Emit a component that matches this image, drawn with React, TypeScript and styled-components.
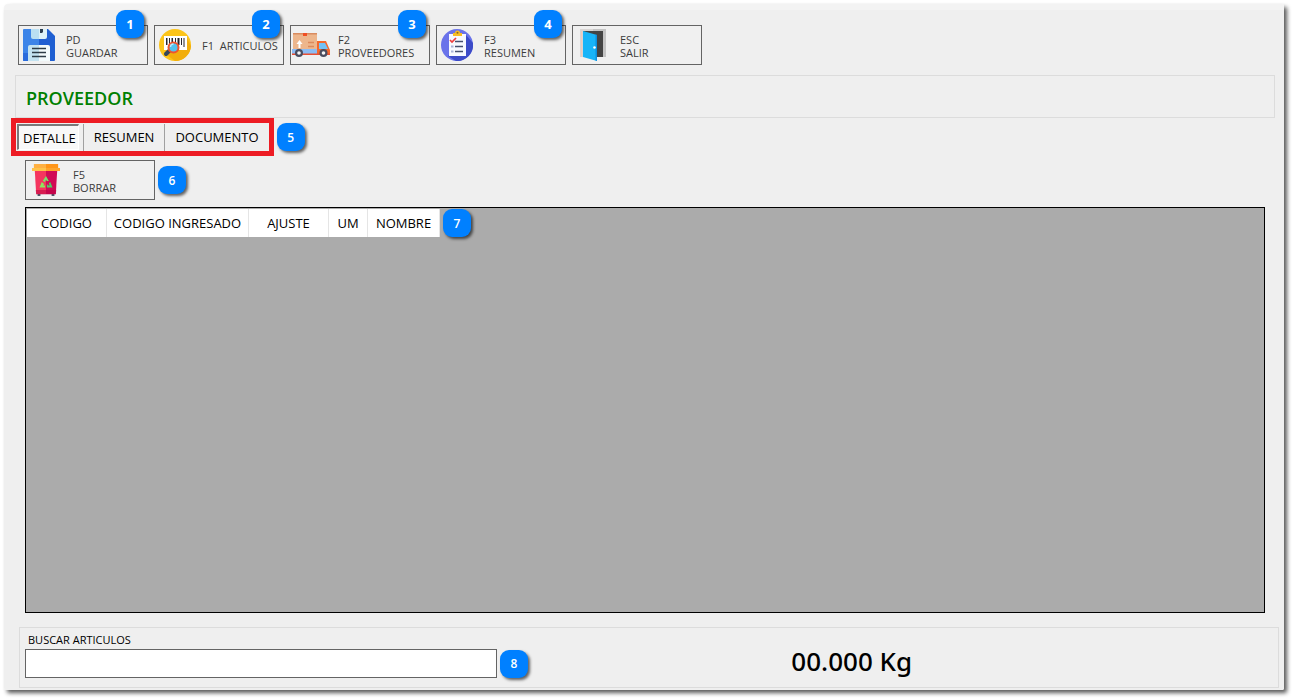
import React, { useState } from "react";
import styled, { createGlobalStyle, css } from "styled-components";

const GlobalStyle = createGlobalStyle`
  *, *::before, *::after { box-sizing: border-box; }
  body {
    margin: 0;
    background: #fff;
    color: #000;
    font-family: "Open Sans", "Noto Sans", sans-serif;
    font-size: 12px;
  }
  button, input { font: inherit; color: inherit; }
`;

const Page = styled.div`
  display: flex;
  min-height: 100vh;
  padding: 4px 9px 9px 4px;
`;

const Window = styled.main`
  flex: 1;
  min-width: 0;
  display: flex;
  flex-direction: column;
  background: linear-gradient(#f3f3f3 6px, #efefef 6px);
  border-radius: 4px 2px 2px 2px;
  box-shadow: 3px 3px 4px rgba(0, 0, 0, 0.65);
`;

const Toolbar = styled.div`
  display: flex;
  gap: 6px;
  padding: 21px 14px 0;
`;

const ToolSlot = styled.div`
  position: relative;
`;

const ToolButton = styled.button<{ $wide?: boolean }>`
  display: flex;
  align-items: center;
  gap: 7px;
  width: ${(p) => (p.$wide ? 140 : 130)}px;
  height: 40px;
  padding: 0;
  border: 1px solid #646464;
  background: #f0f0f0;
  color: #3c3c3c;
  font-size: 11px;
  line-height: 13px;
  text-align: left;
  white-space: pre;
`;

const IconSlot = styled.span`
  flex: none;
  display: flex;
  justify-content: center;
  width: 40px;
`;

const ToolLabel = styled.span`
  padding-top: 1px;
`;

const Badge = styled.span<{ $over?: boolean }>`
  flex: none;
  display: flex;
  align-items: center;
  justify-content: center;
  width: 28px;
  height: 28px;
  border-radius: 9px;
  background: #0080ff;
  box-shadow: 2px 2px 3px rgba(0, 0, 0, 0.6);
  color: #fff;
  font-size: 12px;
  font-weight: 600;
  ${(p) =>
    p.$over &&
    css`
      position: absolute;
      top: -15px;
      right: 4px;
      font-size: 13px;
      font-weight: 700;
    `}
`;

const Supplier = styled.h1`
  margin: 10px 9px 0 11px;
  padding: 10px 10px 6px;
  border: 1px solid #dcdcdc;
  color: #008000;
  font-size: 18px;
  line-height: 25px;
  font-weight: 600;
`;

const Row = styled.div<{ $left: number; $top?: number }>`
  display: flex;
  align-items: center;
  gap: 3px;
  margin: ${(p) => p.$top ?? 0}px 0 0 ${(p) => p.$left}px;
`;

const Tabs = styled.div`
  display: flex;
  align-items: stretch;
  height: 38px;
  padding: 1px 4px 0 1px;
  border: 5px solid #ed1c24;
`;

const Tab = styled.button<{ $active: boolean }>`
  height: 26px;
  padding: 0 5px;
  border: 1px solid transparent;
  background: transparent;
  font-size: 13px;
  line-height: 20px;
  ${(p) =>
    p.$active &&
    css`
      padding: 0 2px 0 4px;
      border-width: 2px 1px 1px 2px;
      border-style: solid;
      border-color: #7a7a7a #fff #fff #7a7a7a;
      background: #f8f8f8;
    `}
`;

const TabSeparator = styled.span`
  width: 1px;
  margin: 0 4px;
  background: #a0a0a0;
`;

const Grid = styled.section`
  flex: 1;
  display: flex;
  align-items: flex-start;
  gap: 3px;
  min-height: 200px;
  margin: 7px 19px 0 21px;
  padding: 1px;
  border: 1px solid #000;
  background: #ababab;
`;

const Table = styled.table`
  table-layout: fixed;
  width: 413px;
  border-spacing: 0;
`;

const HeadCell = styled.th<{ $width: number }>`
  width: ${(p) => p.$width}px;
  height: 28px;
  padding: 0;
  border-right: 1px solid #e5e5e5;
  background: #fff;
  font-size: 13px;
  font-weight: 400;
  line-height: 18px;
  white-space: nowrap;
`;

const Footer = styled.footer`
  display: grid;
  grid-template-columns: 61% 1fr;
  margin: 14px 5px 2px 15px;
  padding: 4px 0 9px 5px;
  border: 1px solid #dcdcdc;
`;

const SearchLabel = styled.label`
  display: block;
  padding-left: 3px;
  margin-bottom: 1px;
  font-size: 11px;
  line-height: 16px;
`;

const SearchInput = styled.input`
  width: 472px;
  height: 29px;
  padding: 0 6px;
  border: 1px solid #646464;
  background: #fff;
  font-size: 13px;
`;

const Weight = styled.output`
  align-self: end;
  padding-left: 2px;
  font-family: "Noto Sans", "Open Sans", sans-serif;
  font-size: 26px;
  font-weight: 500;
  line-height: 34px;
`;

const SaveIcon = () => (
  <svg width="32" height="32" viewBox="0 0 32 32" aria-hidden="true">
    <path d="M1 0h15v32H1a1 1 0 0 1-1-1V1a1 1 0 0 1 1-1z" fill="#3c84e8" />
    <path d="M16 0h9l7 7v24a1 1 0 0 1-1 1H16z" fill="#1f5fd2" />
    <path d="M0 24h5v8H1a1 1 0 0 1-1-1z" fill="#2a6bdc" />
    <path d="M8 0h8v10h-6a2 2 0 0 1-2-2z" fill="#b9dff2" />
    <path d="M16 0h8v8a2 2 0 0 1-2 2h-6z" fill="#dcf1f8" />
    <path d="M17 0h3v3l-1 1h-2z" fill="#2c3e50" />
    <path d="M5 18a2 2 0 0 1 2-2h9v16H5z" fill="#c3e3f1" />
    <path d="M16 16h9a2 2 0 0 1 2 2v14H16z" fill="#f2fafb" />
    <path d="M9 19.500h14M9 23.500h14M9 27.500h14" stroke="#2d3c46" strokeWidth="1.700" />
  </svg>
);

const ArticlesIcon = () => (
  <svg width="32" height="32" viewBox="0 0 32 32" aria-hidden="true">
    <circle cx="16" cy="16" r="16" fill="#fcc419" />
    <path d="M28 9l4 8a16 16 0 0 1-16 15l-8-6z" fill="#f2ae0c" />
    <path d="M5 7h23v14H5z" fill="#fff" />
    <path d="M7 9h1.500v7H7zM10 9h1v6h-1zM12.500 9h1.500v6h-1.500zM16 9h1v5h-1zM18.500 9h2v7h-2zM22 9h1v7h-1zM24.500 9h1v9h-1z" fill="#26262e" />
    <path d="M11 21l-4 4" stroke="#34465a" strokeWidth="4" strokeLinecap="round" />
    <circle cx="14.500" cy="18.500" r="5" fill="#54c1ee" stroke="#f0532d" strokeWidth="2" />
    <path d="M11.500 18a3 3 0 0 1 3-3" stroke="#b8ecff" strokeWidth="1.300" fill="none" />
  </svg>
);

const TruckIcon = () => (
  <svg width="38" height="26" viewBox="0 0 38 26" aria-hidden="true">
    <path d="M1 1h24v20H1z" fill="#edb68c" />
    <path d="M1 1h24v1.500H1z" fill="#d98c60" />
    <path d="M11 1h4v3h-4z" fill="#f04e23" />
    <path d="M7.500 8l3 4h-2v4h-2v-4h-2z" fill="#fff" />
    <path d="M16 10.500h6M16 14.500h6" stroke="#dc8a5c" strokeWidth="1.300" />
    <path d="M0 17h25v5H0z" fill="#8dbcf3" />
    <path d="M25 9h9l3 7 1 2v4H25z" fill="#f4682d" />
    <path d="M27 11h6l3 6h-9z" fill="#74c1f5" />
    <path d="M0 21.500h38V23H0z" fill="#e94f32" />
    <circle cx="7" cy="21" r="4" fill="#4a4c5e" />
    <circle cx="7" cy="21" r="1.800" fill="#f5f5f5" />
    <circle cx="31.500" cy="21" r="4" fill="#4a4c5e" />
    <circle cx="31.500" cy="21" r="1.800" fill="#f5f5f5" />
  </svg>
);

const SummaryIcon = () => (
  <svg width="32" height="32" viewBox="0 0 32 32" aria-hidden="true">
    <circle cx="16" cy="16" r="16" fill="#6a73ea" />
    <path d="M25 6l7 8a16 16 0 0 1-17 18l-8-5z" fill="#3c4bc8" />
    <path d="M8 5h17v22H8z" fill="#f7f9ff" />
    <path d="M12 7V4h2a2.500 2.500 0 0 1 5 0h2v3z" fill="#f8bd22" />
    <circle cx="16.500" cy="3.800" r="1" fill="#8b6a20" />
    <path d="M9 11l2 2 4-4" stroke="#ee3e3e" strokeWidth="1.700" fill="none" />
    <path d="M14 12.500h8M14 17.500h8M14 22.500h8" stroke="#45506f" strokeWidth="1.500" />
    <path d="M10 16.500h2.500v2H10zM10 21.500h2.500v2H10z" fill="#a9b3d8" />
  </svg>
);

const ExitIcon = () => (
  <svg width="26" height="32" viewBox="0 0 26 32" aria-hidden="true">
    <path d="M0 0h26v28H0z" fill="#d9d5d3" />
    <path d="M13 0h13v28H13z" fill="#c4c4c4" />
    <path d="M3 2h20v26H3z" fill="#444" />
    <path d="M1.500 2v26" stroke="#efc9bd" />
    <path d="M3 2l14 4v26L3 28z" fill="#18b4f8" />
    <path d="M15.500 5.600L17 6v26l-1.500-.4z" fill="#0b8fe0" />
    <circle cx="14.500" cy="18.500" r="1.300" fill="#fff" />
  </svg>
);

const DeleteIcon = () => (
  <svg width="28" height="32" viewBox="0 0 30 32" preserveAspectRatio="none" aria-hidden="true">
    <path d="M6 30h3v2H6zM21 30h3v2h-3z" fill="#4d5568" />
    <path d="M3 7h12v23H4.500z" fill="#f5365f" />
    <path d="M15 7h12l-1.500 23H15z" fill="#d10a55" />
    <path d="M4 26h22l-.5 4.500h-21z" fill="#b8003f" opacity=".5" />
    <path d="M2 0h13v5H2z" fill="#ffb042" />
    <path d="M15 0h13v5H15z" fill="#ff9518" />
    <path d="M0 4h15v3H0z" fill="#ffc34a" />
    <path d="M15 4h15v3H15z" fill="#ffa42b" />
    <path d="M15 12l3 5h-2.200L15 15.500 13.800 18l-2.300-1z" fill="#7be36a" />
    <path d="M10.500 18l2.500 2-1 1.500h2v2H8z" fill="#8be85e" />
    <path d="M19.500 18l2.500 5.500h-6V20l1.500 1.500h1.500l-1-2z" fill="#4fcf66" />
  </svg>
);

const tools = [
  { label: "PD\nGUARDAR", Icon: SaveIcon, badge: 1 },
  { label: "F1  ARTICULOS", Icon: ArticlesIcon, badge: 2 },
  { label: "F2\nPROVEEDORES", Icon: TruckIcon, badge: 3, wide: true },
  { label: "F3\nRESUMEN", Icon: SummaryIcon, badge: 4 },
  { label: "ESC\nSALIR", Icon: ExitIcon },
];

const tabs = ["DETALLE", "RESUMEN", "DOCUMENTO"];

const columns = [
  { name: "CODIGO", width: 80 },
  { name: "CODIGO INGRESADO", width: 142 },
  { name: "AJUSTE", width: 80 },
  { name: "UM", width: 39 },
  { name: "NOMBRE", width: 72 },
];

export default function App() {
  const [active, setActive] = useState(tabs[0]);

  return (
    <Page>
      <GlobalStyle />
      <Window>
        <Toolbar role="toolbar">
          {tools.map(({ label, Icon, badge, wide }) => (
            <ToolSlot key={label}>
              <ToolButton type="button" $wide={wide}>
                <IconSlot><Icon /></IconSlot>
                <ToolLabel>{label}</ToolLabel>
              </ToolButton>
              {badge && <Badge $over>{badge}</Badge>}
            </ToolSlot>
          ))}
        </Toolbar>

        <Supplier>PROVEEDOR</Supplier>

        <Row $left={7}>
          <Tabs role="tablist">
            {tabs.map((tab, i) => (
              <React.Fragment key={tab}>
                {i > 0 && <TabSeparator />}
                <Tab
                  type="button"
                  role="tab"
                  aria-selected={tab === active}
                  $active={tab === active}
                  onClick={() => setActive(tab)}
                >
                  {tab}
                </Tab>
              </React.Fragment>
            ))}
          </Tabs>
          <Badge>5</Badge>
        </Row>

        <Row $left={21} $top={4}>
          <ToolButton type="button">
            <IconSlot><DeleteIcon /></IconSlot>
            <ToolLabel>{"F5\nBORRAR"}</ToolLabel>
          </ToolButton>
          <Badge>6</Badge>
        </Row>

        <Grid>
          <Table>
            <thead>
              <tr>
                {columns.map((c) => (
                  <HeadCell key={c.name} scope="col" $width={c.width}>{c.name}</HeadCell>
                ))}
              </tr>
            </thead>
          </Table>
          <Badge>7</Badge>
        </Grid>

        <Footer>
          <div>
            <SearchLabel htmlFor="search">BUSCAR ARTICULOS</SearchLabel>
            <Row $left={0}>
              <SearchInput id="search" type="text" />
              <Badge>8</Badge>
            </Row>
          </div>
          <Weight>00.000 Kg</Weight>
        </Footer>
      </Window>
    </Page>
  );
}
